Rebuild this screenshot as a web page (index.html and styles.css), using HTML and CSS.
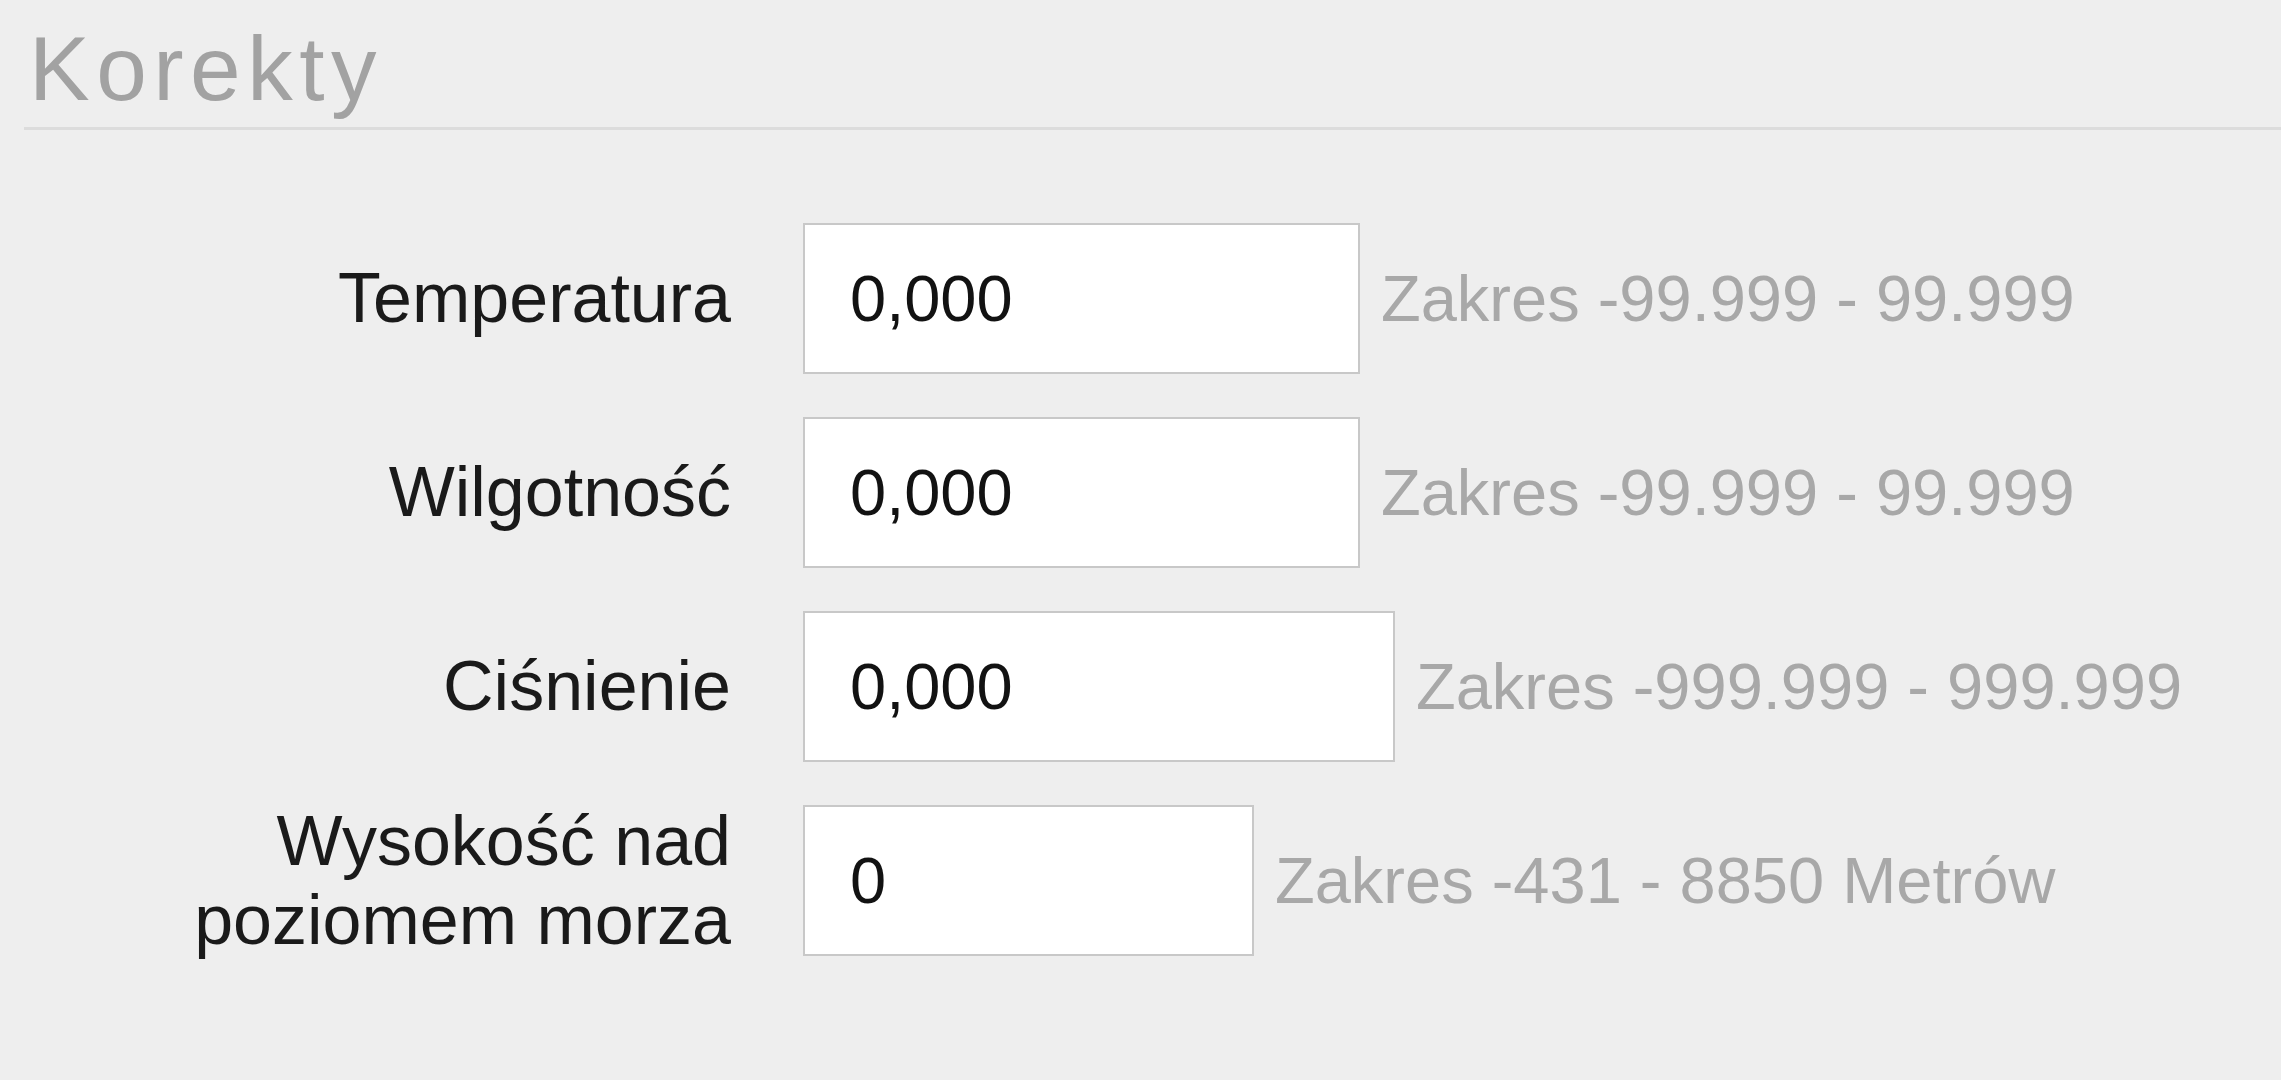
FILE: index.html
```html
<!DOCTYPE html>
<html lang="pl">
<head>
<meta charset="utf-8">
<title>Korekty</title>
<link rel="stylesheet" href="styles.css">
</head>
<body>
<div class="page">
  <h1 class="title">Korekty</h1>
  <div class="rule"></div>
  <form class="form">
    <div class="row">
      <label class="label">Temperatura</label>
      <input class="field w-md" type="text" value="0,000">
      <span class="hint">Zakres -99.999 - 99.999</span>
    </div>
    <div class="row">
      <label class="label">Wilgotność</label>
      <input class="field w-md" type="text" value="0,000">
      <span class="hint">Zakres -99.999 - 99.999</span>
    </div>
    <div class="row">
      <label class="label">Ciśnienie</label>
      <input class="field w-lg" type="text" value="0,000">
      <span class="hint">Zakres -999.999 - 999.999</span>
    </div>
    <div class="row">
      <label class="label">Wysokość nad<br>poziomem morza</label>
      <input class="field w-sm" type="text" value="0">
      <span class="hint">Zakres -431 - 8850 Metrów</span>
    </div>
  </form>
</div>
</body>
</html>
```
FILE: styles.css
```css
html, body {
  margin: 0;
  padding: 0;
  background: #eeeeee;
}
body {
  font-family: "Liberation Sans", Arial, sans-serif;
  width: 2281px;
  height: 1080px;
  overflow: hidden;
}
.page {
  padding-top: 23px;
}
.title {
  margin: 0 0 0 29px;
  font-size: 91px;
  font-weight: normal;
  line-height: 1;
  letter-spacing: 6.5px;
  color: #a2a2a2;
  height: 104px;
}
.rule {
  margin-left: 24px;
  border-top: 3px solid #dcdcdc;
}
.form {
  margin-top: 93px;
  display: flex;
  flex-direction: column;
  gap: 43px;
}
.row {
  display: flex;
  align-items: center;
  height: 151px;
}
.label {
  width: 731px;
  flex: none;
  text-align: right;
  font-size: 70px;
  line-height: 1.12;
  color: #1a1a1a;
  margin-right: 72px;
}
.field {
  box-sizing: border-box;
  height: 151px;
  border: 2px solid #c8c8c8;
  border-radius: 0;
  background: #ffffff;
  padding: 0 0 0 45px;
  margin: 0;
  font-family: "Liberation Sans", Arial, sans-serif;
  font-size: 65px;
  color: #121212;
  outline: none;
  flex: none;
}
.w-md { width: 557px; }
.w-lg { width: 592px; }
.w-sm { width: 451px; }
.hint {
  margin-left: 21px;
  font-size: 65px;
  color: #a8a8a8;
  white-space: nowrap;
}
```
